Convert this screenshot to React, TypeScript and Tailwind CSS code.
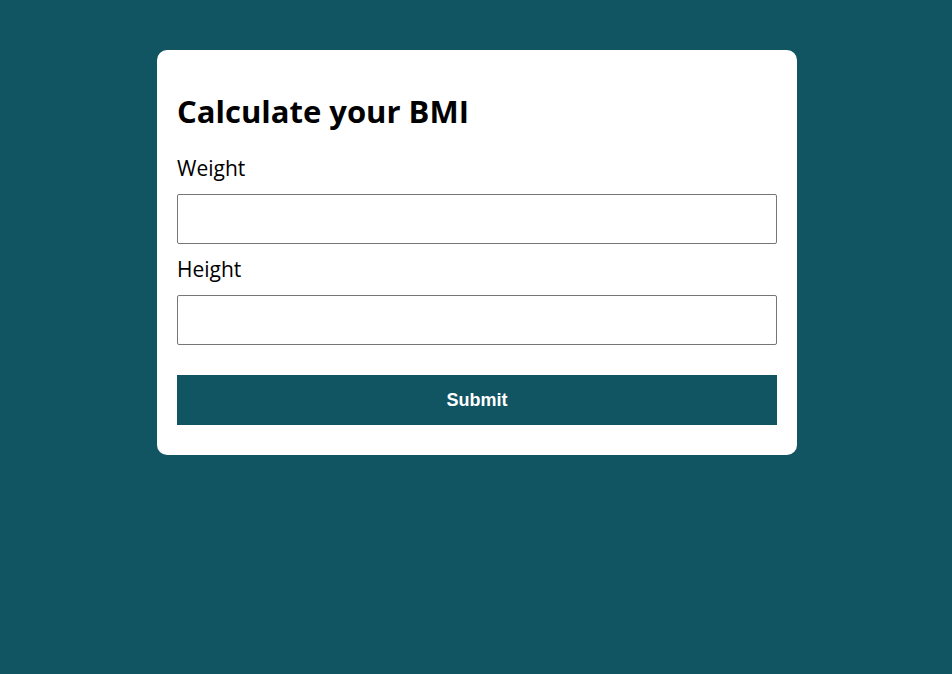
import React from "react";

export default function App() {
  return (
    <div className="min-h-[674px] w-full bg-[#115563] pt-[50px]" style={{ fontFamily: '"Open Sans", sans-serif' }}>
      <div className="ml-[157px] w-[640px] rounded-[10px] bg-white px-[20px] pt-[41px] pb-[30px]">
        <h1 className="text-[31px] font-bold leading-[40px] text-black">Calculate your BMI</h1>
        <form className="flex flex-col" onSubmit={(e) => e.preventDefault()}>
          <label className="mt-[22px] mb-[11px] block text-[21px] leading-[30px] text-black">Weight</label>
          <input type="text" className="h-[50px] w-full rounded-[2px] border border-[#767676] bg-white px-2 outline-none" />
          <label className="mt-[10px] mb-[11px] block text-[21px] leading-[30px] text-black">Height</label>
          <input type="text" className="h-[50px] w-full rounded-[2px] border border-[#767676] bg-white px-2 outline-none" />
          <button
            type="submit"
            className="mt-[30px] h-[50px] w-full bg-[#115563] text-[18px] font-bold text-white"
            style={{ fontFamily: '"Liberation Sans", Arial, sans-serif' }}
          >
            Submit
          </button>
        </form>
      </div>
    </div>
  );
}
